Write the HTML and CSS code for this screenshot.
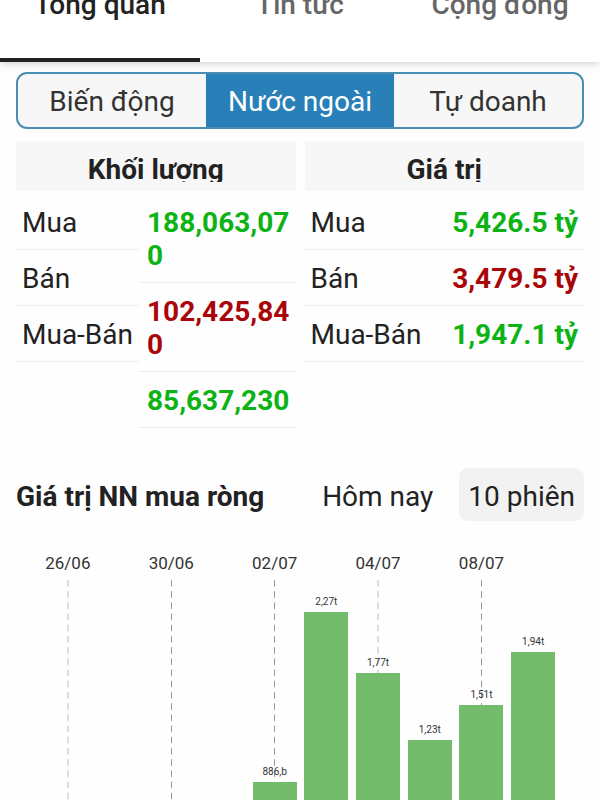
FILE: index.html
```html
<!DOCTYPE html>
<html lang="vi">
<head>
<meta charset="utf-8">
<meta name="viewport" content="width=device-width, initial-scale=1">
<title>Tổng quan</title>
<link rel="stylesheet" href="styles.css">
</head>
<body>
<div class="app">
  <nav class="tabs">
    <a class="tab tab-active" href="#overview">Tổng quan</a>
    <a class="tab" href="#news">Tin tức</a>
    <a class="tab" href="#community">Cộng đồng</a>
  </nav>
  <main class="content">
    <div class="segments">
      <button class="segment" type="button">Biến động</button>
      <button class="segment segment-active" type="button">Nước ngoài</button>
      <button class="segment" type="button">Tự doanh</button>
    </div>

    <div class="summary">
      <section class="panel">
        <h2 class="panel-title"><span class="panel-name">Khối lượng</span></h2>
        <div class="stacks">
          <div class="stack">
            <div class="cell">Mua</div>
            <div class="cell">Bán</div>
            <div class="cell">Mua-Bán</div>
          </div>
          <div class="stack stack-values">
            <div class="cell value up">188,063,070</div>
            <div class="cell value down">102,425,840</div>
            <div class="cell value up">85,637,230</div>
          </div>
        </div>
      </section>
      <section class="panel">
        <h2 class="panel-title"><span class="panel-name">Giá trị</span></h2>
        <table class="figures">
          <tbody>
            <tr><th class="cell" scope="row">Mua</th><td class="cell value up">5,426.5 tỷ</td></tr>
            <tr><th class="cell" scope="row">Bán</th><td class="cell value down">3,479.5 tỷ</td></tr>
            <tr><th class="cell" scope="row">Mua-Bán</th><td class="cell value up">1,947.1 tỷ</td></tr>
          </tbody>
        </table>
      </section>
    </div>

    <div class="chart-head">
      <h2 class="chart-title">Giá trị NN mua ròng</h2>
      <div class="ranges">
        <button class="range" type="button">Hôm nay</button>
        <button class="range range-active" type="button">10 phiên</button>
      </div>
    </div>

    <div class="chart">
      <div class="day"><span class="date">26/06</span><div class="plot grid-light"></div></div>
      <div class="day"><span class="date"></span><div class="plot"></div></div>
      <div class="day"><span class="date">30/06</span><div class="plot grid-dark"></div></div>
      <div class="day"><span class="date"></span><div class="plot"></div></div>
      <div class="day"><span class="date">02/07</span><div class="plot grid-dark"><span class="amount">886,b</span><div class="bar" style="height: 112px"></div></div></div>
      <div class="day"><span class="date"></span><div class="plot"><span class="amount">2,27t</span><div class="bar" style="height: 282px"></div></div></div>
      <div class="day"><span class="date">04/07</span><div class="plot grid-light"><span class="amount">1,77t</span><div class="bar" style="height: 221px"></div></div></div>
      <div class="day"><span class="date"></span><div class="plot"><span class="amount">1,23t</span><div class="bar" style="height: 154px"></div></div></div>
      <div class="day"><span class="date">08/07</span><div class="plot grid-dark"><span class="amount">1,51t</span><div class="bar" style="height: 189px"></div></div></div>
      <div class="day"><span class="date"></span><div class="plot"><span class="amount">1,94t</span><div class="bar" style="height: 242px"></div></div></div>
    </div>
  </main>
</div>
</body>
</html>
```
FILE: styles.css
```css
* {
  box-sizing: border-box;
}

body {
  margin: 0;
  background: #fefefe;
  color: #222;
  font-family: Roboto, "Noto Sans", sans-serif;
  font-size: 28px;
  line-height: 33px;
}

button {
  border: 0;
  padding: 0;
  background: none;
  color: inherit;
  font: inherit;
}

h2 {
  margin: 0;
  font-size: inherit;
  font-weight: 700;
}

.app {
  height: 100vh;
  overflow: hidden;
}

.tabs {
  display: flex;
  height: 62px;
  background: #fff;
  box-shadow: 0 1px 8px rgba(0, 0, 0, 0.2);
}

.tab {
  flex: 1;
  display: flex;
  justify-content: center;
  align-items: flex-end;
  padding-bottom: 39px;
  border-bottom: 4px solid transparent;
  color: #666;
  font-size: 28px;
  font-weight: 500;
  line-height: 28px;
  text-decoration: none;
}

.tab-active {
  border-bottom-color: #222;
  color: #222;
}

.content {
  padding: 10px 16px 0;
}

.segments {
  display: grid;
  grid-template-columns: repeat(3, 1fr);
  height: 57px;
  border: 2px solid #4a8db3;
  border-radius: 11px;
  overflow: hidden;
  background: #f7f7f7;
}

.segment {
  padding-top: 2px;
  color: #333;
}

.segment-active {
  background: #2980b9;
  color: #fff;
}

.summary {
  display: grid;
  grid-template-columns: 1fr 1fr;
  gap: 9px;
  margin-top: 12px;
}

.panel-title {
  display: flex;
  justify-content: center;
  margin-bottom: 3px;
  padding: 16px 0 9px;
  background: #f7f7f7;
}

.panel-name {
  overflow: hidden;
  line-height: 25px;
}

.stacks {
  display: flex;
}

.stack {
  flex: none;
}

.stack-values {
  flex: 1;
  min-width: 0;
}

.cell {
  padding: 12px 6px 10px;
  border-bottom: 1px solid #eee;
}

.value {
  font-weight: 700;
}

.stack-values .cell {
  padding-right: 5px;
  padding-left: 8px;
  word-break: break-all;
}

.figures {
  width: 100%;
  border-spacing: 0;
}

.figures th {
  font-weight: 400;
  text-align: left;
}

.figures td {
  text-align: right;
}

.up {
  color: #0db314;
}

.down {
  color: #a90609;
}

.chart-head {
  display: flex;
  justify-content: space-between;
  align-items: center;
  margin-top: 40px;
}

.chart-title {
  padding-top: 4px;
}

.ranges {
  display: flex;
  gap: 17px;
}

.range {
  height: 53px;
  padding: 4px 9px 0;
  border-radius: 9px;
}

.range-active {
  background: #f2f2f2;
}

.chart {
  display: grid;
  grid-template-columns: repeat(10, 1fr);
  margin-top: 32px;
  padding: 0 25px 0 26px;
}

.day {
  min-width: 0;
}

.date {
  display: flex;
  justify-content: center;
  height: 27px;
  color: #333;
  font-size: 17px;
  line-height: 21px;
}

.plot {
  display: flex;
  flex-direction: column;
  justify-content: flex-end;
  align-items: center;
  height: 314px;
  background-position: top center;
  background-repeat: repeat-y;
  background-size: 2px calc(100% / 28);
}

.grid-light {
  background-image: linear-gradient(#ddd 55%, transparent 55%);
}

.grid-dark {
  background-image: linear-gradient(#999 55%, transparent 55%);
  background-size: 1px calc(100% / 28);
}

.amount {
  color: #333;
  font-size: 10px;
  line-height: 21px;
}

.bar {
  width: 44px;
  background: #72bc6b;
}
```
